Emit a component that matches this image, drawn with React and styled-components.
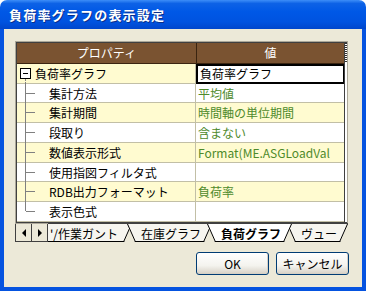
import React from "react"
import styled, { createGlobalStyle } from "styled-components"

const GlobalStyle = createGlobalStyle`
  html, body { margin: 0; padding: 0; background: #ffffff; }
  body {
    font-family: "Noto Sans CJK JP", "Liberation Sans", sans-serif;
    font-size: 12px;
  }
`

const rows = [
  { label: "負荷率グラフ", value: "負荷率グラフ", root: true },
  { label: "集計方法", value: "平均値" },
  { label: "集計期間", value: "時間軸の単位期間" },
  { label: "段取り", value: "含まない" },
  { label: "数値表示形式", value: "Format(ME.ASGLoadVal" },
  { label: "使用指図フィルタ式", value: "" },
  { label: "RDB出力フォーマット", value: "負荷率" },
  { label: "表示色式", value: "", last: true },
]

const tabs = [
  { label: "'/作業ガント", first: true },
  { label: "在庫グラフ" },
  { label: "負荷グラフ", active: true },
  { label: "ヴュー" },
]

const TabEdge = ({ side }) => (
  <EdgeSvg $side={side} width="9" height="18" viewBox="0 0 9 18">
    {side === "left" ? (
      <line x1="0.5" y1="0" x2="8.5" y2="18" stroke="#000" strokeWidth="1" />
    ) : (
      <line x1="8.5" y1="0" x2="0.5" y2="18" stroke="#000" strokeWidth="1" />
    )}
  </EdgeSvg>
)

const App = () => {
  return (
    <>
      <GlobalStyle />
      <Window>
        <TitleBar>負荷率グラフの表示設定</TitleBar>
        <Frame>
          <Body>
            <GridFrame>
              <Grid>
                <HeaderRow>
                  <HeaderCell>プロパティ</HeaderCell>
                  <HeaderCell>値</HeaderCell>
                </HeaderRow>
                {rows.map((row, i) => (
                  <Row key={row.label} $alt={i % 2 === 0}>
                    <NameCell>
                      <Tree>
                        {row.root ? (
                          <MinusBox>
                            <MinusBar />
                          </MinusBox>
                        ) : (
                          <Branch $last={row.last} />
                        )}
                      </Tree>
                      <Label $root={row.root}>{row.label}</Label>
                    </NameCell>
                    <ValueCell $selected={row.root}>{row.value}</ValueCell>
                  </Row>
                ))}
              </Grid>
              <Grip />
            </GridFrame>
            <TabStrip>
              <ArrowButton>
                <svg width="8" height="8" viewBox="0 0 8 8">
                  <path d="M6 0 L2 4 L6 8 Z" fill="#000" />
                </svg>
              </ArrowButton>
              <ArrowButton>
                <svg width="8" height="8" viewBox="0 0 8 8">
                  <path d="M2 0 L6 4 L2 8 Z" fill="#000" />
                </svg>
              </ArrowButton>
              <Tabs>
                {tabs.map((t, i) => (
                  <Tab
                    key={t.label}
                    $active={t.active}
                    $first={t.first}
                    style={{ zIndex: t.active ? 20 : i + 1 }}
                  >
                    <TabFill $active={t.active} />
                    <TabEdge side="left" />
                    <TabEdge side="right" />
                    <TabText $active={t.active}>{t.label}</TabText>
                  </Tab>
                ))}
              </Tabs>
            </TabStrip>
            <ButtonRow>
              <Button>OK</Button>
              <Button>キャンセル</Button>
            </ButtonRow>
          </Body>
        </Frame>
      </Window>
    </>
  )
}

export default App

const Window = styled.div`
  width: 366px;
  height: 291px;
  display: flex;
  flex-direction: column;
  overflow: hidden;
`

const TitleBar = styled.div`
  height: 29px;
  flex: none;
  border-radius: 7px 7px 0 0;
  background: linear-gradient(
    to bottom,
    #3d8ef8 0%,
    #0d62e6 12%,
    #0058e6 40%,
    #0053e0 75%,
    #0046cc 100%
  );
  color: #ffffff;
  font-weight: bold;
  font-size: 13px;
  display: flex;
  align-items: center;
  padding-left: 9px;
  padding-bottom: 1px;
  box-sizing: border-box;
  letter-spacing: 1.2px;
  text-shadow: 1px 1px 0 #0a2f8a;
`

const Frame = styled.div`
  flex: 1;
  display: flex;
  background: #0553e0;
  padding: 0 4px 4px 4px;
`

const Body = styled.div`
  flex: 1;
  background: #ece9d8;
  display: flex;
  flex-direction: column;
  padding: 12px 10px 0 11px;
`

const GridFrame = styled.div`
  width: 333px;
  height: 183px;
  box-sizing: border-box;
  border: 1px solid #aca899;
  background: #ffffff;
  display: flex;
`

const Grid = styled.div`
  flex: 1;
  border: 1px solid #404040;
  border-right: 0;
  display: flex;
  flex-direction: column;
  overflow: hidden;
`

const Grip = styled.div`
  width: 2px;
  border-left: 1px solid #404040;
  border-top: 1px solid #404040;
  border-bottom: 1px solid #404040;
  background: repeating-linear-gradient(
    to bottom,
    #303030 0 1px,
    #ffffff 1px 2px
  ) top / 2px 20px no-repeat, #ffffff;
`

const HeaderRow = styled.div`
  display: grid;
  grid-template-columns: 179px 1fr;
  height: 20px;
  background: #7a5331;
  border-bottom: 1px solid #3a2410;
`

const HeaderCell = styled.div`
  color: #ffffff;
  display: flex;
  align-items: center;
  justify-content: center;
  & + & {
    border-left: 1px solid #3a2410;
  }
`

const Row = styled.div`
  display: grid;
  grid-template-columns: 179px 1fr;
  height: 20px;
  box-sizing: border-box;
  border-bottom: 1px solid #c2bfa6;
  background: ${(p) => (p.$alt ? "#fffbd0" : "#ffffff")};
`

const NameCell = styled.div`
  display: flex;
  align-items: center;
  border-right: 1px solid #c2bfa6;
  min-width: 0;
  white-space: nowrap;
`

const Tree = styled.div`
  position: relative;
  width: 18px;
  height: 100%;
  flex: none;
  margin-left: 3px;
`

const MinusBox = styled.div`
  position: absolute;
  left: 0;
  top: 4px;
  width: 9px;
  height: 9px;
  border: 1px solid #000000;
  background: #ffffff;
  &::after {
    content: "";
    position: absolute;
    left: 4px;
    top: 10px;
    height: 6px;
    border-left: 1px dotted #808080;
  }
`

const MinusBar = styled.div`
  position: absolute;
  left: 2px;
  top: 4px;
  width: 5px;
  height: 1px;
  background: #000000;
`

const Branch = styled.div`
  position: absolute;
  left: 5px;
  top: -1px;
  height: ${(p) => (p.$last ? "10px" : "21px")};
  border-left: 1px solid #808080;
  &::after {
    content: "";
    position: absolute;
    left: 0;
    top: 10px;
    width: 9px;
    border-top: 1px solid #808080;
  }
`

const Label = styled.span`
  color: #000000;
  margin-left: ${(p) => (p.$root ? "-3px" : "11px")};
`

const ValueCell = styled.div`
  display: flex;
  align-items: center;
  padding-left: 2px;
  color: ${(p) => (p.$selected ? "#000000" : "#4e8a2b")};
  white-space: nowrap;
  overflow: hidden;
  box-sizing: border-box;
  ${(p) =>
    p.$selected &&
    `
    background: #ffffff;
    border: 2px solid #000000;
    margin: 0 -1px -1px 0;
  `}
`

const TabStrip = styled.div`
  display: flex;
  align-items: stretch;
  height: 18px;
  width: 333px;
`

const ArrowButton = styled.div`
  width: 15px;
  flex: none;
  display: flex;
  align-items: center;
  justify-content: center;
  background: #ece9d8;
  border: 1px solid #404040;
  border-top: 0;
  & + & {
    border-left: 0;
  }
`

const Tabs = styled.div`
  position: relative;
  display: flex;
  flex: 1;
  overflow: hidden;
  border-top: 1px solid #404040;
  margin-top: -1px;
`

const Tab = styled.div`
  position: relative;
  flex: none;
  height: 18px;
  margin-left: ${(p) => (p.$first ? "-12px" : "-5px")};
  padding: 0 ${(p) => (p.$first ? "14px" : "11px")} 0
    ${(p) => (p.$first ? "14px" : "14px")};
  display: flex;
  align-items: center;
`

const TabFill = styled.div`
  position: absolute;
  inset: 0;
  background: ${(p) => (p.$active ? "#ffffff" : "#f6f5ef")};
  clip-path: polygon(0 0, 100% 0, calc(100% - 8px) 100%, 8px 100%);
  border-bottom: 1px solid #000000;
  box-sizing: border-box;
`

const EdgeSvg = styled.svg`
  position: absolute;
  top: 0;
  ${(p) => (p.$side === "left" ? "left: 0;" : "right: 0;")}
`

const TabText = styled.span`
  position: relative;
  white-space: nowrap;
  color: #000000;
  font-weight: ${(p) => (p.$active ? "bold" : "normal")};
`

const ButtonRow = styled.div`
  display: flex;
  justify-content: flex-end;
  gap: 7px;
  margin-top: 10px;
  width: 334px;
`

const Button = styled.div`
  width: 73px;
  height: 23px;
  box-sizing: border-box;
  border: 1px solid #003c74;
  border-radius: 3px;
  background: linear-gradient(to bottom, #ffffff 0%, #f4f3ee 60%, #d6d0c5 100%);
  box-shadow: inset -1px -1px 0 #d6d0c5;
  display: flex;
  align-items: center;
  justify-content: center;
  color: #000000;
`
